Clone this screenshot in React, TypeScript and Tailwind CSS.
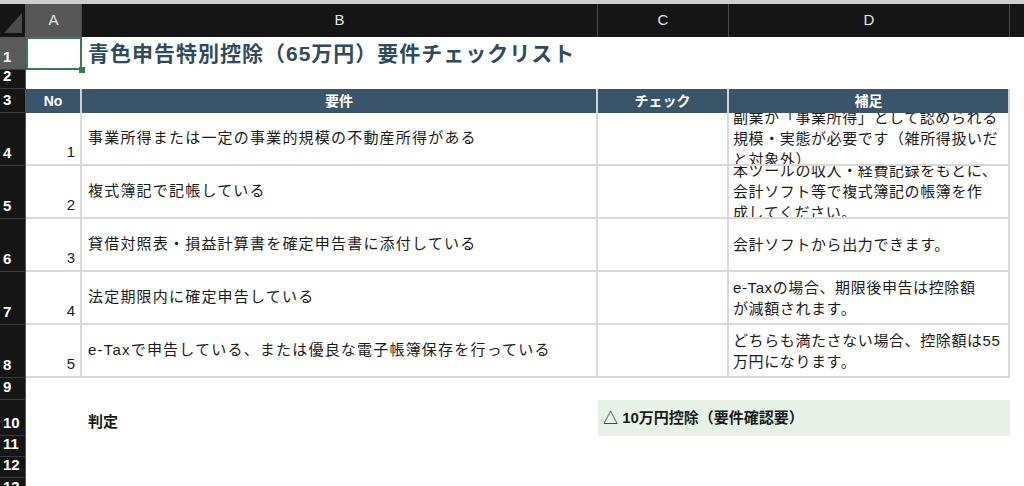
import React from "react";

const FONT = { fontFamily: '"Liberation Sans", "Noto Sans CJK JP", sans-serif' };

const GRID = "border-[#d9d9d9]";

type Item = { no: number; req: string; note: string[] };

const items: Item[] = [
  {
    no: 1,
    req: "事業所得または一定の事業的規模の不動産所得がある",
    note: ["副業が「事業所得」として認められる", "規模・実態が必要です（雑所得扱いだ", "と対象外）"],
  },
  {
    no: 2,
    req: "複式簿記で記帳している",
    note: ["本ツールの収入・経費記録をもとに、", "会計ソフト等で複式簿記の帳簿を作", "成してください。"],
  },
  { no: 3, req: "貸借対照表・損益計算書を確定申告書に添付している", note: ["会計ソフトから出力できます。"] },
  { no: 4, req: "法定期限内に確定申告している", note: ["e-Taxの場合、期限後申告は控除額", "が減額されます。"] },
  {
    no: 5,
    req: "e-Taxで申告している、または優良な電子帳簿保存を行っている",
    note: ["どちらも満たさない場合、控除額は55", "万円になります。"],
  },
];

function RowHead({ n, h, active }: { n: number; h: string; active?: boolean }) {
  return (
    <div
      className={`${h} w-[26px] shrink-0 flex items-end pl-[3px] pb-[1px] text-[15px] font-bold text-white border-b border-[#3a3a3a] border-r border-r-[#555] ${
        active ? "bg-[#5a5a5a]" : "bg-[#151515]"
      }`}
    >
      {n}
    </div>
  );
}

function ColHead({ label, w, active }: { label: string; w: string; active?: boolean }) {
  return (
    <div
      className={`${w} shrink-0 h-full flex items-center justify-center text-[15px] text-[#e4e4e4] border-r border-[#4a4a4a] ${
        active ? "bg-[#575757]" : "bg-[#151515]"
      }`}
    >
      {label}
    </div>
  );
}

export default function App() {
  return (
    <div className="w-[1024px] h-[486px] overflow-hidden bg-white text-[#1a1a1a]" style={FONT}>
      <div className="h-[4px] bg-[#cfcfcf]" />

      {/* column headers */}
      <div className="flex h-[33px] bg-[#151515]">
        <div className="w-[26px] shrink-0 h-full relative border-r border-[#555]">
          <svg className="absolute left-[3px] top-[8px]" width="20" height="22" viewBox="0 0 20 22">
            <polygon points="19,1 19,21 1,21" fill="#4b4b4b" />
          </svg>
        </div>
        <ColHead label="A" w="w-[56px]" active />
        <ColHead label="B" w="w-[516px]" />
        <ColHead label="C" w="w-[131px]" />
        <ColHead label="D" w="w-[281px]" />
        <div className="flex-1" />
      </div>

      {/* row 1: title */}
      <div className="flex h-[33px]">
        <RowHead n={1} h="h-[33px]" active />
        <div className="w-[56px] shrink-0 h-full relative">
          <div className="absolute inset-0 border-2 border-[#3d7a4c]" />
          <div className="absolute right-[-3px] bottom-[-3px] w-[6px] h-[6px] bg-[#3d7a4c]" />
        </div>
        <div className="flex-1 flex items-center pl-[6px] whitespace-nowrap text-[21px] font-bold text-[#2f4b60] tracking-[1px]">
          青色申告特別控除（65万円）要件チェックリスト
        </div>
      </div>

      {/* row 2 */}
      <div className="flex h-[19px]">
        <RowHead n={2} h="h-[19px]" />
      </div>

      {/* row 3: table header */}
      <div className="flex h-[24px]">
        <RowHead n={3} h="h-[24px]" />
        {[
          ["No", "w-[56px]"],
          ["要件", "w-[516px]"],
          ["チェック", "w-[131px]"],
          ["補足", "w-[281px]"],
        ].map(([t, w]) => (
          <div
            key={t}
            className={`${w} shrink-0 h-full bg-[#3a5469] flex items-center justify-center text-[14px] font-bold text-white border-r-2 border-r-[#d0d0d0]`}
          >
            {t}
          </div>
        ))}
      </div>

      {/* rows 4-8 */}
      {items.map((it, i) => (
        <div key={it.no} className="flex h-[53px]">
          <RowHead n={i + 4} h="h-[53px]" />
          <div className={`w-[56px] shrink-0 h-full flex items-end justify-end pr-[5px] pb-[1px] text-[15px] border-r-2 border-b-2 ${GRID}`}>
            {it.no}
          </div>
          <div className={`w-[516px] shrink-0 h-full flex items-center pl-[6px] whitespace-nowrap text-[15px] tracking-[1.2px] border-r-2 border-b-2 ${GRID}`}>
            {it.req}
          </div>
          <div className={`w-[131px] shrink-0 h-full border-r-2 border-b-2 ${GRID}`} />
          <div
            className={`w-[281px] shrink-0 h-full flex flex-col justify-center overflow-hidden pl-[4px] text-[15px] leading-[21px] tracking-[0.6px] whitespace-nowrap border-r-2 border-b-2 ${GRID}`}
          >
            {it.note.map((l) => (
              <div key={l}>{l}</div>
            ))}
          </div>
        </div>
      ))}

      {/* row 9 */}
      <div className="flex h-[22px]">
        <RowHead n={9} h="h-[22px]" />
      </div>

      {/* row 10: result */}
      <div className="flex h-[36px]">
        <RowHead n={10} h="h-[36px]" />
        <div className="w-[56px] shrink-0" />
        <div className="w-[516px] shrink-0 flex items-end pb-[3px] pl-[6px] text-[15px] font-bold">判定</div>
        <div className="w-[412px] shrink-0 h-full bg-[#e7f2e7] flex items-center pl-[5px] text-[15px] font-bold whitespace-nowrap">
          △ 10万円控除（要件確認要）
        </div>
      </div>

      <div className="flex h-[21px]">
        <RowHead n={11} h="h-[21px]" />
      </div>
      <div className="flex h-[21px]">
        <RowHead n={12} h="h-[21px]" />
      </div>
      <div className="flex h-[22px]">
        <RowHead n={13} h="h-[22px]" />
      </div>
    </div>
  );
}
